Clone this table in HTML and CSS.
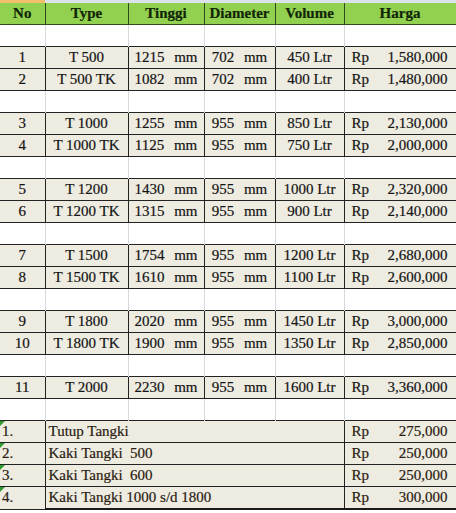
FILE: index.html
```html
<!DOCTYPE html>
<html>
<head>
<meta charset="utf-8">
<link rel="stylesheet" href="styles.css">
</head>
<body>
<div class="strip"><div class="sel"></div><div class="rest"></div></div>
<table class="sheet">
<colgroup>
<col class="c-no"><col class="c-type"><col class="c-ting"><col class="c-dia"><col class="c-vol"><col class="c-har">
</colgroup>
<tr class="head"><th>No</th><th>Type</th><th>Tinggi</th><th>Diameter</th><th>Volume</th><th>Harga</th></tr>
<tr class="blank"><td></td><td></td><td></td><td></td><td></td><td></td></tr>
<tr class="data"><td>1</td><td>T 500</td><td>1215 <span class="u">mm</span></td><td>702 <span class="u">mm</span></td><td>450 Ltr</td><td><div class="money"><span>Rp</span><span>1,580,000</span></div></td></tr>
<tr class="data"><td>2</td><td>T 500 TK</td><td>1082 <span class="u">mm</span></td><td>702 <span class="u">mm</span></td><td>400 Ltr</td><td><div class="money"><span>Rp</span><span>1,480,000</span></div></td></tr>
<tr class="blank"><td></td><td></td><td></td><td></td><td></td><td></td></tr>
<tr class="data"><td>3</td><td>T 1000</td><td>1255 <span class="u">mm</span></td><td>955 <span class="u">mm</span></td><td>850 Ltr</td><td><div class="money"><span>Rp</span><span>2,130,000</span></div></td></tr>
<tr class="data"><td>4</td><td>T 1000 TK</td><td>1125 <span class="u">mm</span></td><td>955 <span class="u">mm</span></td><td>750 Ltr</td><td><div class="money"><span>Rp</span><span>2,000,000</span></div></td></tr>
<tr class="blank"><td></td><td></td><td></td><td></td><td></td><td></td></tr>
<tr class="data"><td>5</td><td>T 1200</td><td>1430 <span class="u">mm</span></td><td>955 <span class="u">mm</span></td><td>1000 Ltr</td><td><div class="money"><span>Rp</span><span>2,320,000</span></div></td></tr>
<tr class="data"><td>6</td><td>T 1200 TK</td><td>1315 <span class="u">mm</span></td><td>955 <span class="u">mm</span></td><td>900 Ltr</td><td><div class="money"><span>Rp</span><span>2,140,000</span></div></td></tr>
<tr class="blank"><td></td><td></td><td></td><td></td><td></td><td></td></tr>
<tr class="data"><td>7</td><td>T 1500</td><td>1754 <span class="u">mm</span></td><td>955 <span class="u">mm</span></td><td>1200 Ltr</td><td><div class="money"><span>Rp</span><span>2,680,000</span></div></td></tr>
<tr class="data"><td>8</td><td>T 1500 TK</td><td>1610 <span class="u">mm</span></td><td>955 <span class="u">mm</span></td><td>1100 Ltr</td><td><div class="money"><span>Rp</span><span>2,600,000</span></div></td></tr>
<tr class="blank"><td></td><td></td><td></td><td></td><td></td><td></td></tr>
<tr class="data"><td>9</td><td>T 1800</td><td>2020 <span class="u">mm</span></td><td>955 <span class="u">mm</span></td><td>1450 Ltr</td><td><div class="money"><span>Rp</span><span>3,000,000</span></div></td></tr>
<tr class="data"><td>10</td><td>T 1800 TK</td><td>1900 <span class="u">mm</span></td><td>955 <span class="u">mm</span></td><td>1350 Ltr</td><td><div class="money"><span>Rp</span><span>2,850,000</span></div></td></tr>
<tr class="blank"><td></td><td></td><td></td><td></td><td></td><td></td></tr>
<tr class="data"><td>11</td><td>T 2000</td><td>2230 <span class="u">mm</span></td><td>955 <span class="u">mm</span></td><td>1600 Ltr</td><td><div class="money"><span>Rp</span><span>3,360,000</span></div></td></tr>
<tr class="blank"><td></td><td></td><td></td><td></td><td></td><td></td></tr>
<tr class="extra"><td class="idx">1.</td><td class="desc" colspan="4">Tutup Tangki</td><td><div class="money"><span>Rp</span><span>275,000</span></div></td></tr>
<tr class="extra"><td class="idx">2.</td><td class="desc" colspan="4">Kaki Tangki  500</td><td><div class="money"><span>Rp</span><span>250,000</span></div></td></tr>
<tr class="extra"><td class="idx">3.</td><td class="desc" colspan="4">Kaki Tangki  600</td><td><div class="money"><span>Rp</span><span>250,000</span></div></td></tr>
<tr class="extra last"><td class="idx">4.</td><td class="desc" colspan="4">Kaki Tangki 1000 s/d 1800</td><td><div class="money"><span>Rp</span><span>300,000</span></div></td></tr>
</table>
</body>
</html>
```
FILE: styles.css
```css
html, body {
  margin: 0;
  padding: 0;
  background: #ffffff;
}
body {
  font-family: "Liberation Serif", "Times New Roman", serif;
  font-size: 15px;
  color: #141414;
}
.strip {
  display: flex;
  height: 3px;
}
.strip .sel {
  width: 45px;
  background: #f2bf6a;
}
.strip .rest {
  flex: 1;
  background: #dbe2ea;
}
.sheet {
  border-collapse: collapse;
  table-layout: fixed;
  width: 456px;
}
.c-no { width: 45px; }
.c-type { width: 83px; }
.c-ting { width: 76px; }
.c-dia { width: 71px; }
.c-vol { width: 69px; }
.c-har { width: 112px; }

.sheet th, .sheet td {
  padding: 0;
  height: 21px;
  line-height: 21px;
  font-size: 15px;
  white-space: pre;
  overflow: hidden;
  -webkit-text-stroke: 0.2px currentColor;
}
.head th {
  background: #92d050;
  color: #112508;
  font-weight: bold;
  text-align: center;
  border: 1px solid #2f4a1c;
  border-top: none;
}
.head th:first-child { border-left: none; }

.blank td {
  border-left: 1px solid #d9d9d9;
  border-right: 1px solid #d9d9d9;
  border-top: none;
  border-bottom: none;
  background: #ffffff;
}
.blank td:first-child { border-left: none; }

.data td, .extra td {
  background: #eeece1;
  border: 1px solid #222222;
  text-align: center;
}
.data td:first-child, .extra td:first-child { border-left: none; }

.u { margin-left: 6px; }

.money {
  display: flex;
  justify-content: space-between;
  padding: 0 8px 0 7px;
}

.extra td { color: #2a1b12; }
.extra td.idx {
  text-align: left;
  padding-left: 2px;
  position: relative;
}
.extra td.idx::before {
  content: "";
  position: absolute;
  left: 0;
  top: 0;
  border-top: 5px solid #2e9a2e;
  border-right: 5px solid transparent;
}
.extra td.desc {
  text-align: left;
  padding-left: 3px;
}
.extra.last td.desc, .extra.last td:last-child {
  border-bottom: 2px solid #1a1a1a;
}
```
